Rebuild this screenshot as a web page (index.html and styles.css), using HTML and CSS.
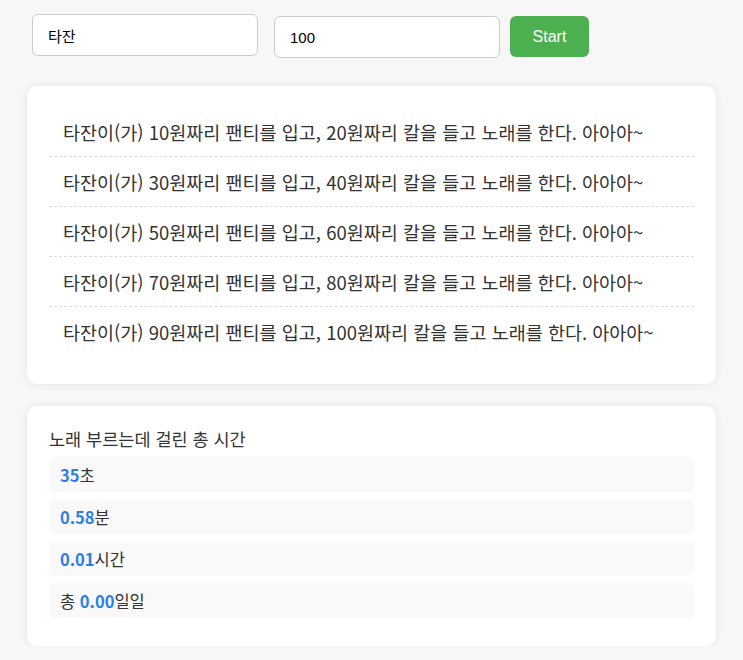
FILE: index.html
```html
<!DOCTYPE html>
<html lang="ko">
<head>
<meta charset="utf-8">
<link rel="stylesheet" href="styles.css">
</head>
<body>
<div class="page">
  <div class="controls">
    <input class="field field-name" type="text" value="타잔">
    <input class="field field-num" type="text" value="100">
    <button class="start">Start</button>
  </div>
  <div class="card song">
    <ul class="lines">
      <li>타잔이(가) 10원짜리 팬티를 입고, 20원짜리 칼을 들고 노래를 한다. 아아아~</li>
      <li>타잔이(가) 30원짜리 팬티를 입고, 40원짜리 칼을 들고 노래를 한다. 아아아~</li>
      <li>타잔이(가) 50원짜리 팬티를 입고, 60원짜리 칼을 들고 노래를 한다. 아아아~</li>
      <li>타잔이(가) 70원짜리 팬티를 입고, 80원짜리 칼을 들고 노래를 한다. 아아아~</li>
      <li>타잔이(가) 90원짜리 팬티를 입고, 100원짜리 칼을 들고 노래를 한다. 아아아~</li>
    </ul>
  </div>
  <div class="card stats">
    <div class="stats-title">노래 부르는데 걸린 총 시간</div>
    <div class="row"><b class="num">35</b>초</div>
    <div class="row"><b class="num">0.58</b>분</div>
    <div class="row"><b class="num">0.01</b>시간</div>
    <div class="row">총 <b class="num">0.00</b>일일</div>
  </div>
</div>
</body>
</html>
```
FILE: styles.css
```css
html, body {
  margin: 0;
  padding: 0;
  background: #f7f7f7;
}
body {
  font-family: "Noto Sans CJK KR", "Noto Sans", sans-serif;
  color: #333;
}
.page {
  padding: 14px 27px 0 27px;
  width: 689px;
}
.controls {
  display: flex;
  align-items: flex-start;
  padding-left: 5px;
}
.field {
  box-sizing: border-box;
  width: 226px;
  height: 42px;
  border: 1px solid #ccc;
  border-radius: 6px;
  background: #fff;
  padding: 0 15px;
  font-family: "Liberation Sans", "Noto Sans CJK KR", sans-serif;
  font-size: 15px;
  color: #000;
  outline: none;
}
.field-name {
  margin-right: 16px;
}
.field-num {
  margin-top: 2px;
  margin-right: 10px;
}
.start {
  margin-top: 2px;
  width: 79px;
  height: 41px;
  border: none;
  border-radius: 6px;
  background: #4caf50;
  color: #fff;
  font-family: "Liberation Sans", sans-serif;
  font-size: 16px;
  padding: 0;
}
.card {
  background: #fff;
  border-radius: 10px;
  box-shadow: 0 0 8px rgba(0, 0, 0, 0.08);
  box-sizing: border-box;
}
.song {
  margin-top: 28px;
  padding: 22px 22px 28px 22px;
}
.lines {
  list-style: none;
  margin: 0;
  padding: 0;
}
.lines li {
  height: 49px;
  padding: 0 14px;
  display: flex;
  align-items: center;
  font-size: 18.5px;
  border-bottom: 1px dashed #ddd;
  color: #333;
}
.lines li:first-child {
  height: 48px;
}
.lines li:last-child {
  border-bottom: none;
}
.stats {
  margin-top: 22px;
  padding: 20px 22px 28px 22px;
}
.stats-title {
  font-size: 17.5px;
  line-height: 26px;
  margin-bottom: 5px;
}
.row {
  box-sizing: border-box;
  height: 35px;
  display: flex;
  align-items: center;
  padding: 0 11px;
  background: #f9f9f9;
  border-radius: 6px;
  font-size: 16.5px;
  margin-bottom: 7px;
  white-space: pre;
}
.row:last-child {
  margin-bottom: 0;
}
.num {
  color: #2b7de9;
  font-weight: bold;
}
```
